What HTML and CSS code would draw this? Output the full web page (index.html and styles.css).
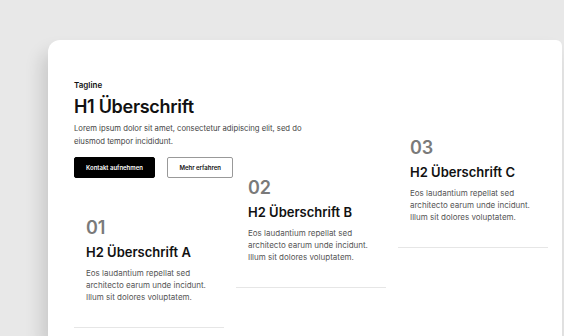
FILE: index.html
```html
<!DOCTYPE html>
<html lang="de">
<head>
    <meta charset="UTF-8">
    <meta name="viewport" content="width=device-width, initial-scale=1.0">
    <title>Features</title>
    <link rel="stylesheet" href="styles.css">
</head>
<body>

<div class="karte">
    <!-- Kopfbereich -->
    <div class="hero">
        <p class="tagline">Tagline</p>
        <h1>H1 Überschrift</h1>
        <p class="intro">Lorem ipsum dolor sit amet, consectetur adipiscing elit, sed do eiusmod tempor incididunt.</p>
        <div class="buttons">
            <button class="btn btn-dunkel">Kontakt aufnehmen</button>
            <button class="btn btn-hell">Mehr erfahren</button>
        </div>
    </div>

    <!-- Versetzte Spalten -->
    <div class="features">
        <div class="feature feature-1">
            <div class="nummer">01</div>
            <h2>H2 Überschrift A</h2>
            <p>Eos laudantium repellat sed architecto earum unde incidunt. Illum sit dolores voluptatem.</p>
        </div>
        <div class="feature feature-2">
            <div class="nummer">02</div>
            <h2>H2 Überschrift B</h2>
            <p>Eos laudantium repellat sed architecto earum unde incidunt. Illum sit dolores voluptatem.</p>
        </div>
        <div class="feature feature-3">
            <div class="nummer">03</div>
            <h2>H2 Überschrift C</h2>
            <p>Eos laudantium repellat sed architecto earum unde incidunt. Illum sit dolores voluptatem.</p>
        </div>
    </div>
</div>

</body>
</html>
```

FILE: styles.css
```css
html, body {
    margin: 0;
    height: 100%;
    overflow: hidden;
}
body {
    background-color: #e8e8e8;
    font-family: Inter, "Noto Sans", sans-serif;
    color: #111;
    padding: 40px 2px 0 48px;
    box-sizing: border-box;
}
.karte {
    background-color: #fff;
    border-radius: 12px 6px 0 0;
    padding: 39px 26px 0 26px;
    height: 100%;
    box-sizing: border-box;
    box-shadow: -6px 12px 18px rgba(0,0,0,0.14);
}
.hero {
    width: 250px;
}
.tagline {
    margin: 0;
    font-size: 8px;
    line-height: 12px;
    font-weight: 600;
}
h1 {
    margin: 5px 0 0 0;
    font-size: 18px;
    line-height: 22px;
    font-weight: 600;
    letter-spacing: -0.3px;
}
.intro {
    margin: 4px 0 0 0;
    font-size: 7.7px;
    line-height: 13px;
    color: #444;
}
.buttons {
    display: flex;
    gap: 12px;
    margin-top: 9px;
}
.btn {
    height: 21px;
    padding: 0 11px;
    font-family: inherit;
    font-size: 6px;
    font-weight: 600;
    border-radius: 2px;
    cursor: pointer;
}
.btn-dunkel {
    background-color: #000;
    color: #fff;
    border: 1px solid #000;
}
.btn-hell {
    background-color: #fff;
    color: #111;
    border: 1px solid #999;
    padding: 0 11.5px;
}
.features {
    display: grid;
    grid-template-columns: repeat(3, 150px);
    gap: 12px;
    align-items: start;
    margin-top: -41px;
}
.feature {
    padding: 0 12px 24px 12px;
    border-bottom: 1px solid #e6e6e6;
}
/* Spalten versetzt */
.feature-1 { margin-top: 80px; }
.feature-2 { margin-top: 40px; }
.feature-3 { margin-top: 0; }
.nummer {
    font-size: 18px;
    line-height: 22px;
    font-weight: 600;
    color: #7a7a7a;
}
h2 {
    margin: 5px 0 0 0;
    font-size: 13px;
    line-height: 17px;
    font-weight: 600;
}
.feature p {
    margin: 6px 0 0 0;
    font-size: 8px;
    line-height: 12px;
    color: #555;
}
```
